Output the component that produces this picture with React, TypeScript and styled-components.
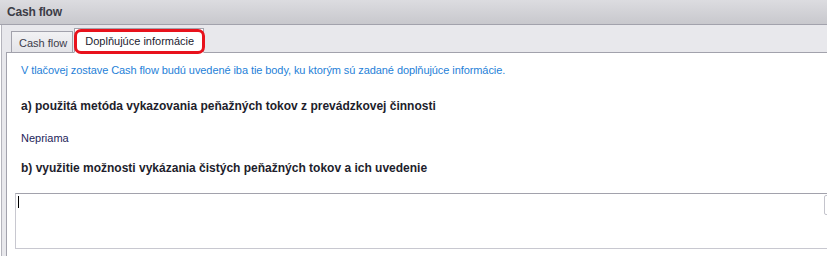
import React from 'react';
import styled, { createGlobalStyle } from 'styled-components';

const GlobalStyle = createGlobalStyle`
  html, body {
    margin: 0;
    padding: 0;
    background: #ffffff;
    overflow: hidden;
  }
  body {
    font-family: "Liberation Sans", Arial, sans-serif;
  }
`;

const Window = styled.div`
  width: 827px;
  height: 256px;
  display: flex;
  flex-direction: column;
  overflow: hidden;
`;

const TitleBar = styled.div`
  height: 24px;
  flex-shrink: 0;
  display: flex;
  align-items: center;
  padding-left: 7px;
  background: linear-gradient(to bottom, #dcdce0, #c8c8cd);
  border-bottom: 1px solid #a2a2ac;
  color: #3c3c46;
  font-weight: bold;
  font-size: 12px;
  letter-spacing: -0.2px;
`;

const Body = styled.div`
  flex: 1;
  display: flex;
  flex-direction: column;
  margin-left: 1px;
  padding-left: 4px;
  border-left: 1px solid #b4b4bc;
  background: #e8e8ec;
`;

const TabStrip = styled.div`
  height: 27px;
  flex-shrink: 0;
  display: flex;
  align-items: flex-end;
  padding-left: 5px;
  gap: 1px;
`;

const Tab = styled.div<{ $active?: boolean }>`
  position: relative;
  display: flex;
  align-items: center;
  box-sizing: border-box;
  height: ${(p) => (p.$active ? '25px' : '21px')};
  padding: ${(p) => (p.$active ? '0 9px 0 10px' : '1px 5px 0 7px')};
  margin-bottom: ${(p) => (p.$active ? '-1px' : '0')};
  border: 1px solid #a2a2ac;
  border-bottom: ${(p) => (p.$active ? '1px solid #ffffff' : 'none')};
  background: ${(p) =>
    p.$active ? '#ffffff' : 'linear-gradient(to bottom, #f2f2f4, #e4e4e8)'};
  color: ${(p) => (p.$active ? '#1c1c30' : '#3c3c4a')};
  font-size: 11px;
  z-index: ${(p) => (p.$active ? 1 : 0)};
`;

const Highlight = styled.span`
  position: absolute;
  left: -1px;
  top: 0px;
  right: -2px;
  bottom: -2px;
  border: 3px solid #e8121c;
  border-radius: 7px;
  pointer-events: none;
`;

const Panel = styled.div`
  flex: 1;
  display: flex;
  flex-direction: column;
  background: #ffffff;
  border-top: 1px solid #a2a2ac;
  border-left: 1px solid #a2a2ac;
  padding: 10px 0 0 14px;
`;

const Note = styled.div`
  color: #1f7fd8;
  font-size: 11px;
  height: 14px;
  line-height: 14px;
  letter-spacing: -0.08px;
`;

const Heading = styled.div<{ $top: number }>`
  margin-top: ${(p) => p.$top}px;
  color: #1e1e2c;
  font-weight: bold;
  font-size: 12px;
  height: 15px;
  line-height: 15px;
`;

const Value = styled.div`
  margin-top: 17px;
  color: #1e1e5a;
  font-size: 11px;
  height: 14px;
  line-height: 14px;
`;

const TextBox = styled.div`
  margin: 17px 0 0 -6px;
  width: 830px;
  height: 56px;
  flex-shrink: 0;
  box-sizing: border-box;
  display: flex;
  justify-content: space-between;
  align-items: flex-start;
  border: 1px solid #c8c8d0;
  border-top-color: #a2a2ac;
  padding: 2px 4px 0 2px;
`;

const Caret = styled.span`
  width: 1px;
  height: 12px;
  background: #000000;
`;

const ScrollThumb = styled.span`
  width: 16px;
  height: 20px;
  margin-top: -1px;
  box-sizing: border-box;
  border: 1px solid #c4c4cc;
  border-radius: 2px;
`;

export default function App() {
  return (
    <>
      <GlobalStyle />
      <Window>
        <TitleBar>Cash flow</TitleBar>
        <Body>
          <TabStrip>
            <Tab>Cash flow</Tab>
            <Tab $active>
              Doplňujúce informácie
              <Highlight />
            </Tab>
          </TabStrip>
          <Panel>
            <Note>
              V tlačovej zostave Cash flow budú uvedené iba tie body, ku ktorým sú zadané doplňujúce informácie.
            </Note>
            <Heading $top={22}>
              a) použitá metóda vykazovania peňažných tokov z prevádzkovej činnosti
            </Heading>
            <Value>Nepriama</Value>
            <Heading $top={16}>
              b) využitie možnosti vykázania čistých peňažných tokov a ich uvedenie
            </Heading>
            <TextBox>
              <Caret />
              <ScrollThumb />
            </TextBox>
          </Panel>
        </Body>
      </Window>
    </>
  );
}
